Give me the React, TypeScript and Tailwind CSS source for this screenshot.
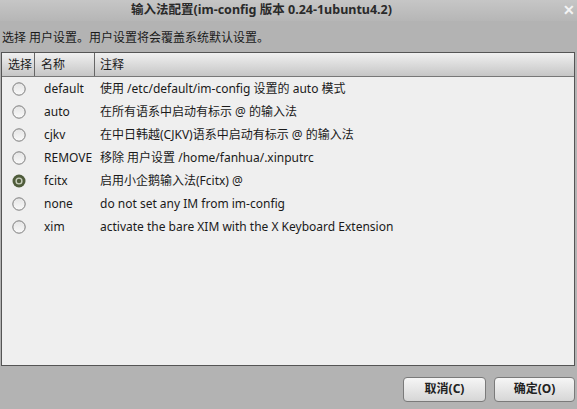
import React from "react";

const rows = [
  { name: "default", note: "使用 /etc/default/im-config 设置的 auto 模式" },
  { name: "auto", note: "在所有语系中启动有标示 @ 的输入法" },
  { name: "cjkv", note: "在中日韩越(CJKV)语系中启动有标示 @ 的输入法" },
  { name: "REMOVE", note: "移除 用户设置 /home/fanhua/.xinputrc" },
  { name: "fcitx", note: "启用小企鹅输入法(Fcitx) @" },
  { name: "none", note: "do not set any IM from im-config" },
  { name: "xim", note: "activate the bare XIM with the X Keyboard Extension" },
];

function Radio({ checked }: { checked: boolean }) {
  if (checked) {
    return (
      <svg width="14" height="14" viewBox="0 0 14 14">
        <circle cx="7" cy="7" r="6.5" fill="#4f5c3b" />
        <circle cx="7" cy="7" r="3.6" fill="#c9cfbd" />
        <circle cx="7" cy="7" r="2.2" fill="#4f5c3b" />
      </svg>
    );
  }
  return (
    <svg width="14" height="14" viewBox="0 0 14 14">
      <defs>
        <linearGradient id="rg" x1="0" y1="0" x2="0" y2="1">
          <stop offset="0" stopColor="#e4e4e4" />
          <stop offset="1" stopColor="#fafafa" />
        </linearGradient>
      </defs>
      <circle cx="7" cy="7" r="6.2" fill="url(#rg)" stroke="#7a7a7a" strokeWidth="1" />
    </svg>
  );
}

export default function App() {
  return (
    <div
      className="w-[577px] h-[409px] bg-[#b3b3b3] flex flex-col text-[12px] text-[#1a1a1a] overflow-hidden"
      style={{ fontFamily: '"Noto Sans", "Noto Sans CJK SC", sans-serif' }}
    >
      {/* Title bar */}
      <div className="relative h-[21px] shrink-0 bg-gradient-to-b from-[#c6c6c6] to-[#b6b6b6] flex items-center justify-center pr-[54px]">
        <span className="font-bold text-[12.5px] text-[#2a2a2a] leading-none">输入法配置(im-config 版本 0.24-1ubuntu4.2)</span>
        <span className="absolute right-[2px] top-[3px] text-[14px] font-bold text-[#f4f4f4] leading-none">✕</span>
      </div>

      <div className="px-[2px] pt-[7px] h-[31px] leading-[20px] shrink-0 text-[12px] text-[#1a1a1a]">
        选择 用户设置。用户设置将会覆盖系统默认设置。
      </div>

      {/* Table */}
      <div className="mx-[1px] mr-[2px] h-[314px] border-[1.5px] border-[#555] bg-[#efefef] flex flex-col">
        <div className="flex h-[24px] shrink-0 bg-gradient-to-b from-[#f0f0f0] to-[#c6c6c6] border-b border-[#777]">
          <div className="w-[33px] border-r border-[#666] pl-[6px] flex items-center">选择</div>
          <div className="w-[60px] border-r border-[#666] pl-[6px] flex items-center">名称</div>
          <div className="flex-1 pl-[5px] flex items-center">注释</div>
        </div>
        <div className="flex flex-col">
          {rows.map((r) => (
            <div key={r.name} className="flex h-[23px] items-center">
              <div className="w-[33px] flex justify-center pl-[1px]">
                <Radio checked={r.name === "fcitx"} />
              </div>
              <div className="w-[60px] pl-[9px]">{r.name}</div>
              <div className="flex-1 pl-[5px] whitespace-nowrap">{r.note}</div>
            </div>
          ))}
        </div>
      </div>

      {/* Buttons */}
      <div className="flex-1 flex justify-end items-center gap-[8px] pr-[2px] pt-[3px]">
        <button className="w-[83px] h-[25px] rounded-[4px] border border-[#7a7a7a] bg-gradient-to-b from-[#f6f6f6] to-[#d6d6d6] font-bold text-[12px] text-[#222]">
          取消(C)
        </button>
        <button className="w-[81px] h-[25px] rounded-[4px] border border-[#7a7a7a] bg-gradient-to-b from-[#f6f6f6] to-[#d6d6d6] font-bold text-[12px] text-[#222]">
          确定(O)
        </button>
      </div>
    </div>
  );
}
